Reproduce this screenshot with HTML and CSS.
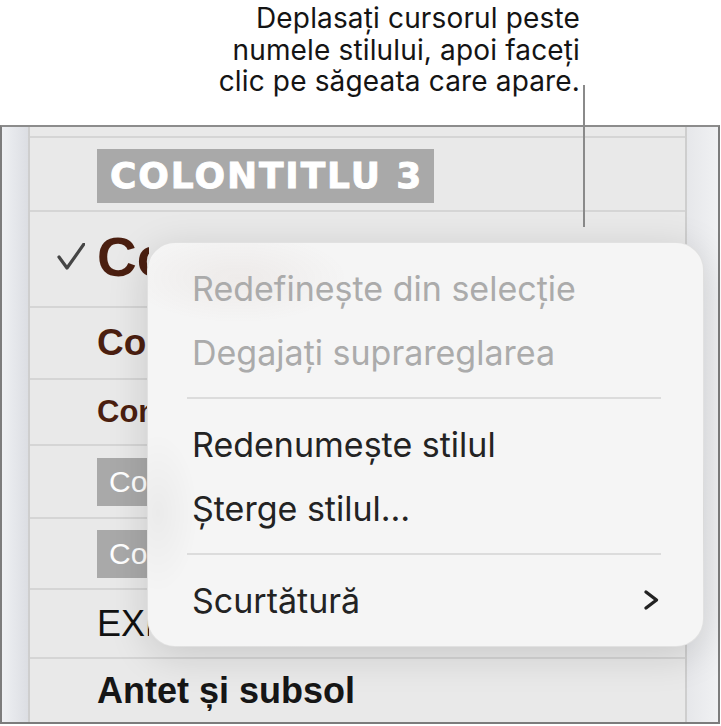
FILE: index.html
```html
<!DOCTYPE html>
<html lang="ro">
<head>
  <meta charset="UTF-8" />
  <meta name="viewport" content="width=device-width, initial-scale=1.0"/>
  <title>Stiluri de paragraf</title>
  <link rel="stylesheet" href="styles.css">
</head>
<body>
  <div class="caption">
    <p>Deplasați cursorul peste<br>numele stilului, apoi faceți<br>clic pe săgeata care apare.</p>
  </div>
  <div class="leader"></div>

  <div class="frame">
    <div class="side side-left"></div>
    <ul class="styles">
      <li class="row row-0"></li>
      <li class="row row-1"><span class="tag tag-caps">COLONTITLU 3</span></li>
      <li class="row row-2 checked">
        <svg class="check" width="28" height="28" viewBox="0 0 28 28"><path d="M2 14 L10 25 L27 1" fill="none" stroke="#454545" stroke-width="3.2" stroke-linecap="round" stroke-linejoin="round"/></svg>
        <span class="cut"><span class="brown big">Corp text</span></span>
      </li>
      <li class="row row-3"><span class="cut"><span class="brown mid">Corp mare</span></span></li>
      <li class="row row-4"><span class="cut"><span class="brown small">Conținut</span></span></li>
      <li class="row row-5"><span class="cut"><span class="tag tag-plain">Colontitlu 4</span></span></li>
      <li class="row row-6"><span class="cut"><span class="tag tag-plain">Colontitlu 5</span></span></li>
      <li class="row row-7"><span class="cut"><span class="plain">EXPLICAȚIE</span></span></li>
      <li class="row row-8"><span class="plain medium">Antet și subsol</span></li>
    </ul>
    <div class="side side-right"></div>
  </div>

  <div class="menu">
    <div class="item disabled">Redefinește din selecție</div>
    <div class="item disabled">Degajați suprareglarea</div>
    <div class="sep"></div>
    <div class="item">Redenumește stilul</div>
    <div class="item">Șterge stilul…</div>
    <div class="sep"></div>
    <div class="item has-sub">Scurtătură
      <svg class="chev" width="20" height="22" viewBox="0 0 20 22"><path d="M5 3 L15.5 11 L5 19" fill="none" stroke="#222" stroke-width="3.4" stroke-linecap="round" stroke-linejoin="round"/></svg>
    </div>
  </div>
</body>
</html>
```

FILE: styles.css
```css
body {
  margin: 0;
  background: #fff;
  font-family: Inter, "Noto Sans", sans-serif;
  color: #111;
  width: 721px;
  height: 726px;
  overflow: hidden;
}

.caption {
  height: 125px;
  display: flex;
  justify-content: flex-end;
  padding-right: 141px;
  box-sizing: border-box;
}
.caption p {
  margin: 0;
  padding-top: 3px;
  font-size: 28px;
  letter-spacing: 0.15px;
  line-height: 31.5px;
  text-align: right;
  color: #141414;
}

/* callout line from the caption down into the list */
.leader {
  position: absolute;
  left: 583px;
  top: 85px;
  width: 2px;
  height: 142px;
  background: #8a8a8a;
}

.frame {
  display: flex;
  width: 720px;
  height: 599px;
  box-sizing: border-box;
  border: 2px solid #7c7c7c;
  border-top-color: #8c8c8c;
}
.side-left {
  width: 26px;
  background: linear-gradient(to right, #eef0f3, #dcdee3);
}
.side-right {
  width: 31px;
  background: linear-gradient(to right, #e6e7ea, #f0f1f3);
}

.styles {
  flex: 1;
  margin: 0;
  padding: 0;
  list-style: none;
  background: #e9e9e9;
  border-left: 2px solid #cecece;
  border-right: 2px solid #cecece;
  font-family: "Liberation Sans", Arial, sans-serif;
}
.row {
  display: flex;
  align-items: center;
  box-sizing: border-box;
  padding-left: 67px;
  border-bottom: 2px solid #d5d5d5;
  white-space: nowrap;
  overflow: hidden;
}
.row-0 { height: 11px; }
.row-1 { height: 74px; padding-top: 3px; }
.row-2 { height: 96px; }
.row-3 { height: 72px; }
.row-4 { height: 66px; }
.row-5 { height: 73px; }
.row-6 { height: 71px; }
.row-7 { height: 69px; }
.row-8 { height: 63px; border-bottom: none; }

/* the part of a name that runs under the menu is hidden */
.cut {
  display: inline-flex;
  max-width: 52px;
  overflow: hidden;
}

.row.checked { padding-left: 27px; }
.check { margin-right: 12px; margin-top: -4px; }

.tag {
  background: #a9a9a9;
  color: #fff;
}
.tag-caps {
  font-family: "DejaVu Sans", sans-serif;
  font-weight: 700;
  font-size: 36px;
  letter-spacing: 1.9px;
  line-height: 54px;
  padding: 0 11px 0 13px;
  -webkit-text-stroke: 0.9px #fff;
}
.tag-plain {
  font-size: 30px;
  line-height: 48px;
  padding: 0 12px;
}

.brown { color: #4b1f10; font-weight: 700; }
.big { font-size: 55px; margin-top: -4px; }
.mid { font-size: 37px; }
.small { font-size: 31px; }

.plain { color: #111; font-size: 36px; }
.medium { font-weight: 700; color: #161616; }

/* context menu floating over the list */
.menu {
  position: absolute;
  left: 147px;
  top: 242px;
  width: 557px;
  height: 405px;
  box-sizing: border-box;
  padding: 13px 42px 0 39px;
  border-radius: 28px;
  background:
    radial-gradient(ellipse 110px 45px at 90px 35px, rgba(120, 70, 50, 0.06), transparent),
    radial-gradient(ellipse 40px 80px at 10px 270px, rgba(0, 0, 0, 0.04), transparent),
    #f5f5f5;
  border: 1px solid rgba(0, 0, 0, 0.08);
  box-shadow: 0 8px 40px rgba(0, 0, 0, 0.14);
}
.item {
  display: flex;
  align-items: center;
  height: 64px;
  padding-left: 5px;
  font-size: 34px;
  color: #232323;
}
.item.disabled { color: #ababab; }
.has-sub { justify-content: space-between; padding-right: 0; }
.sep {
  height: 2px;
  margin: 13px 0;
  background: #dcdcdc;
}
```
